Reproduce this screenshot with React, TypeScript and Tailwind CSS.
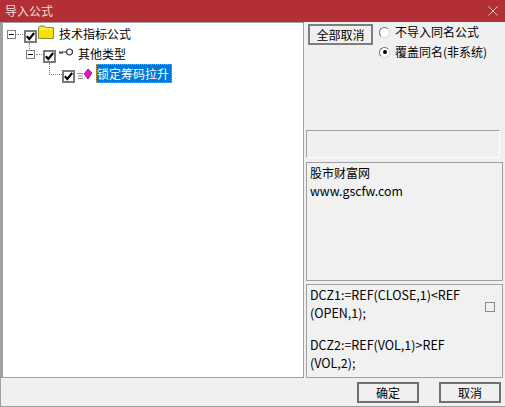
import React from "react";

const F = { fontFamily: '"Noto Sans CJK SC", "Liberation Sans", sans-serif' };

function Check({ link }: { link?: boolean }) {
  return (
    <span className="relative mt-[5px] flex h-[13px] w-[13px] shrink-0 items-center justify-center border-2 border-[#7a7a7a] bg-white">
      <svg width="9" height="9" viewBox="0 0 9 9">
        <path d="M0.8 4.2 L3.3 7 L8.2 1" fill="none" stroke="#000" strokeWidth="2.2" />
      </svg>
      {link && <span className="absolute left-[3px] top-[11px] h-[8px] w-0 border-l border-dotted border-[#808080]" />}
    </span>
  );
}

function Expander() {
  return (
    <span className="flex h-[9px] w-[9px] shrink-0 items-center justify-center border border-[#808080] bg-white">
      <span className="h-px w-[5px] bg-black" />
    </span>
  );
}

function Radio({ checked, label }: { checked?: boolean; label: string }) {
  return (
    <div className="flex h-5 items-center gap-[5px]">
      <span className="flex h-[11px] w-[11px] items-center justify-center rounded-full border border-t-[#707070] border-l-[#707070] border-r-[#d8d8d8] border-b-[#d8d8d8] bg-white">
        {checked && <span className="h-[4px] w-[4px] rounded-full bg-black" />}
      </span>
      <span className="text-[12px] leading-none text-black">{label}</span>
    </div>
  );
}

export default function App() {
  return (
    <div style={F} className="flex h-[407px] w-[505px] flex-col overflow-hidden bg-[#f0f0f0] text-[12px] text-black">
      <div className="flex h-[22px] shrink-0 items-center justify-between bg-[#b23035] pl-[5px] pr-[7px]">
        <span className="text-[12px] leading-none text-[#f2dcdc]">导入公式</span>
        <svg width="10" height="10" viewBox="0 0 10 10">
          <path d="M0.5 0.5 L9.5 9.5 M9.5 0.5 L0.5 9.5" stroke="#e8c8c8" strokeWidth="1" />
        </svg>
      </div>

      <div className="flex min-h-0 flex-1 flex-col border-b border-l border-[#a0a0a0]">
        <div className="flex h-[356px] shrink-0 pr-[2px]">
          <div className="h-[356px] w-[303px] shrink-0 border border-l-2 border-[#a0a0a0] bg-white pt-px pl-[4px]">
            <div className="flex h-[20px] items-center">
              <Expander />
              <span className="mx-px w-[6px] border-t border-dotted border-[#808080]" />
              <Check link />
              <svg width="16" height="14" viewBox="0 0 16 14" className="ml-px mb-[4px]">
                <path d="M0.5 2.5 L1.5 1 H6.5 L8 2.5 H15.5 V13.5 H0.5 Z" fill="#f5e200" stroke="#8a8a50" />
                <path d="M2 4 H14" stroke="#fff8a0" />
              </svg>
              <span className="mb-px ml-[5px] text-[12px] leading-none">技术指标公式</span>
            </div>
            <div className="flex h-[20px] items-center pl-[19px]">
              <Expander />
              <span className="mx-px w-[6px] border-t border-dotted border-[#808080]" />
              <Check />
              <svg width="16" height="9" viewBox="0 0 16 9" className="ml-[2px] mb-[4px]">
                <circle cx="11.5" cy="4" r="3" fill="none" stroke="#333" strokeWidth="1.2" />
                <path d="M8 4 H1 M2 4 V6 M4 4 V6" fill="none" stroke="#333" strokeWidth="1.2" />
              </svg>
              <span className="mb-px ml-[4px] text-[12px] leading-none">其他类型</span>
            </div>
            <div className="flex h-[20px] items-center pl-[42px]">
              <span className="-mt-px h-[12px] w-[13px] shrink-0 self-start border-b border-l border-dotted border-[#808080]" />
              <Check />
              <svg width="16" height="12" viewBox="0 0 16 12" className="ml-[2px]">
                <path d="M0 5.5 H6 M1 8 H6 M1 10.5 H6" stroke="#8a8a8a" strokeWidth="1" />
                <path d="M11 1 L15 5 L11 11 L7 6 Z" fill="#e810c8" stroke="#60086a" strokeWidth="0.7" />
              </svg>
              <span className="ml-[3px] flex h-[19px] w-[76px] items-center self-start border border-dotted border-[#c8a040] bg-[#0078d7] text-[12px] leading-none text-white">
                锁定筹码拉升
              </span>
            </div>
          </div>

          <div className="flex h-[356px] min-w-0 flex-1 flex-col pl-[2px]">
            <div className="flex h-[108px] shrink-0 items-start pt-[2px] pl-[2px]">
              <button className="h-[21px] w-[65px] border-2 border-[#7e7e7e] bg-[#f0f0f0] text-[12px] leading-none text-black">全部取消</button>
              <div className="-mt-[2px] ml-[6px] flex flex-col">
                <Radio label="不导入同名公式" />
                <Radio checked label="覆盖同名(非系统)" />
              </div>
            </div>
            <div className="h-[28px] w-[194px] shrink-0 border border-t-[#a0a0a0] border-l-[#a0a0a0] border-r-white border-b-white bg-[#f0f0f0]" />
            <div className="mt-[4px] h-[119px] shrink-0 border border-[#a0a0a0] bg-[#f1f1f1] px-[3px] pt-px text-[12px] leading-[18px]">
              <div>股市财富网</div>
              <div className="text-[12.3px]">www.gscfw.com</div>
            </div>
            <div className="relative mt-[3px] flex-1 border border-[#a0a0a0] bg-[#f1f1f1] pl-[3px] pt-px text-[12.5px] leading-[18px]">
              <div>DCZ1:=REF(CLOSE,1)&lt;REF</div>
              <div>(OPEN,1);</div>
              <div className="h-[14px]" />
              <div>DCZ2:=REF(VOL,1)&gt;REF</div>
              <div>(VOL,2);</div>
              <span className="absolute right-[7px] top-[17px] h-[10px] w-[10px] border border-[#8a8a8a] bg-[#f1f1f1]" />
            </div>
          </div>
        </div>

        <div className="flex min-h-0 flex-1 justify-end gap-[20px] pt-[4px] pr-[4px]">
          <button className="h-[21px] w-[62px] border-2 border-[#707070] bg-[#f0f0f0] text-[12px] leading-none text-black">确定</button>
          <button className="h-[21px] w-[62px] border-2 border-[#707070] bg-[#f0f0f0] text-[12px] leading-none text-black">取消</button>
        </div>
      </div>
    </div>
  );
}
